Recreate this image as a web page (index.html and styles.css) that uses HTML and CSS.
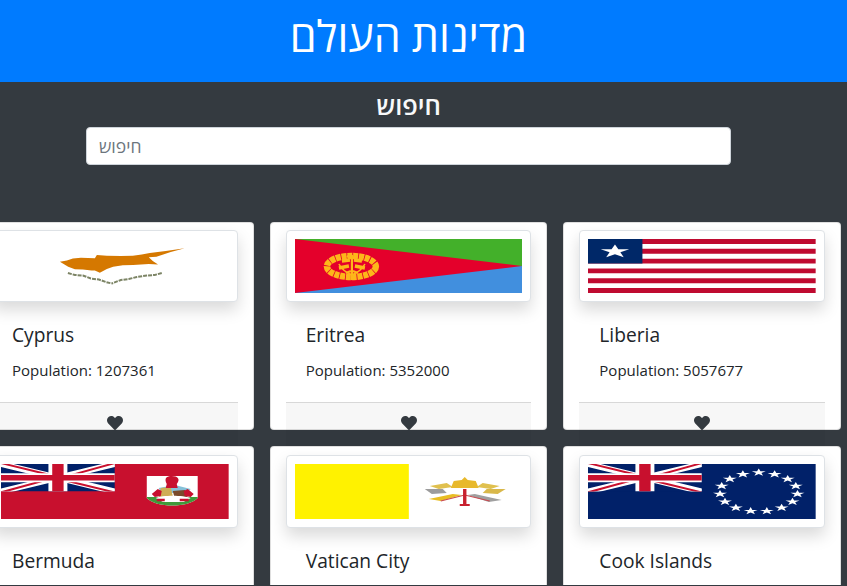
FILE: index.html
```html
<!DOCTYPE html>
<html lang="he" dir="rtl">
<head>
<meta charset="utf-8">
<title>מדינות העולם</title>
<link rel="stylesheet" href="styles.css">
</head>
<body>
<div class="page">
  <svg class="defs" width="0" height="0" aria-hidden="true">
    <defs>
      <symbol id="union" viewBox="0 0 60 30" preserveAspectRatio="none">
        <rect width="60" height="30" fill="#012169"/>
        <path d="M0 0L60 30M60 0L0 30" stroke="#fff" stroke-width="6"/>
        <path d="M0 -1L30 14M60 31L30 16M60 -1L32 15M0 31L28 15" stroke="#c8102e" stroke-width="2"/>
        <path d="M30 0V30M0 15H60" stroke="#fff" stroke-width="10"/>
        <path d="M30 0V30M0 15H60" stroke="#c8102e" stroke-width="6"/>
      </symbol>
      <polygon id="islandstar" points="0,-4 1.7,-1.2 7,-1.2 2.7,0.5 4.3,3.2 0,1.5 -4.3,3.2 -2.7,0.5 -7,-1.2 -1.7,-1.2" fill="#fff"/>
      <symbol id="heart" viewBox="0 0 512 512">
        <path d="M462.3 62.6C407.5 15.9 326 24.3 275.7 76.2L256 96.5l-19.7-20.3C186.1 24.3 104.5 15.9 49.7 62.6c-62.8 53.6-66.1 149.8-9.9 207.9l193.5 199.8c12.5 12.9 32.8 12.9 45.3 0l193.5-199.8c56.3-58.1 53-154.3-9.8-207.9z"/>
      </symbol>
    </defs>
  </svg>

  <header class="site-header">
    <h1 class="site-title">מדינות העולם</h1>
  </header>

  <main class="content">
    <section class="search">
      <h4 class="search-title">חיפוש</h4>
      <input class="search-input" type="text" dir="ltr" placeholder="חיפוש">
    </section>

    <section class="grid">
      <article class="card">
        <div class="thumb">
          <svg class="flag" viewBox="0 0 228 54" preserveAspectRatio="none" role="img" aria-label="Liberia flag">
            <rect width="228" height="54" fill="#fff"/>
            <path d="M0 2.45H228M0 12.27H228M0 22.09H228M0 31.91H228M0 41.73H228M0 51.55H228" stroke="#bf0a30" stroke-width="4.91"/>
            <rect width="54.5" height="24.5" fill="#002868"/>
            <polygon transform="translate(27 12.5)" points="0,-7 3.4,-2.2 14.3,-2.2 5.4,0.8 8.8,5.7 0,2.7 -8.8,5.7 -5.4,0.8 -14.3,-2.2 -3.4,-2.2" fill="#fff"/>
          </svg>
        </div>
        <div class="card-body">
          <h5 class="card-title">Liberia</h5>
          <p class="card-text">Population: 5057677</p>
        </div>
        <div class="card-footer"><svg class="heart"><use href="#heart"/></svg></div>
      </article>

      <article class="card">
        <div class="thumb">
          <svg class="flag" viewBox="0 0 228 54" preserveAspectRatio="none" role="img" aria-label="Eritrea flag">
            <rect width="228" height="27" fill="#43b02a"/>
            <rect y="27" width="228" height="27" fill="#418fde"/>
            <polygon points="0,0 228,27 0,54" fill="#e4002b"/>
            <g class="soft" fill="none" stroke="#fdb71a">
              <ellipse cx="56.5" cy="27.5" rx="24.5" ry="10.5" stroke-width="6.5" stroke-dasharray="5 0.8"/>
              <path d="M57 41V16" stroke-width="2.2"/>
              <path d="M57 36C50 33 46 29 44 25M57 36C64 33 68 29 70 25" stroke-width="1.6"/>
              <path d="M44 29L54 27M70 29L60 27M47 22L55 21M67 22L59 21" stroke-width="3.4"/>
              <path d="M51 34L56 32M63 34L58 32M52 17L56 19M62 17L58 19" stroke-width="2.4"/>
            </g>
          </svg>
        </div>
        <div class="card-body">
          <h5 class="card-title">Eritrea</h5>
          <p class="card-text">Population: 5352000</p>
        </div>
        <div class="card-footer"><svg class="heart"><use href="#heart"/></svg></div>
      </article>

      <article class="card">
        <div class="thumb">
          <svg class="flag" viewBox="0 0 228 54" preserveAspectRatio="none" role="img" aria-label="Cyprus flag">
            <rect width="228" height="54" fill="#fff"/>
            <g class="soft">
              <path d="M59 22.7L66 21.5L72 19.5L80 18.8L94 19.3L96 16L106 16.8L120 17L132 16.7L141 15.5L149 14L165 12L184 9.3L170 13L155.7 17.7L148 18.2L152 22L157.3 25.5L148 25L132.3 26L122 26.3L112.3 27.7L106 30L99 33.7L94 31.5L90.7 31.5L82 30.5L74 30.3L67.3 27.7Z" fill="#d57800"/>
              <path d="M67 34L74 36L82 36.5L90 39.5L98 40.5L105 43L111 44.5" fill="none" stroke="#7c8465" stroke-width="2" stroke-dasharray="4 1"/>
              <path d="M161 34L154 36L146 36.5L136 38L128 40L120 41L111 44.5" fill="none" stroke="#7c8465" stroke-width="2" stroke-dasharray="4 1"/>
            </g>
          </svg>
        </div>
        <div class="card-body">
          <h5 class="card-title">Cyprus</h5>
          <p class="card-text">Population: 1207361</p>
        </div>
        <div class="card-footer"><svg class="heart"><use href="#heart"/></svg></div>
      </article>

      <article class="card">
        <div class="thumb">
          <svg class="flag flag-tall" viewBox="0 0 228 55" preserveAspectRatio="none" role="img" aria-label="Cook Islands flag">
            <rect width="228" height="55" fill="#012169"/>
            <use href="#union" width="114" height="27.5"/>
            <g class="soft">
              <use href="#islandstar" x="171" y="8.5"/><use href="#islandstar" x="186.9" y="10.2"/><use href="#islandstar" x="200" y="15"/>
              <use href="#islandstar" x="208.1" y="22"/><use href="#islandstar" x="209.8" y="30"/><use href="#islandstar" x="204.8" y="37.8"/>
              <use href="#islandstar" x="193.9" y="43.8"/><use href="#islandstar" x="179.1" y="47.1"/><use href="#islandstar" x="162.9" y="47.1"/>
              <use href="#islandstar" x="148.1" y="43.8"/><use href="#islandstar" x="137.2" y="37.8"/><use href="#islandstar" x="132.2" y="30"/>
              <use href="#islandstar" x="133.9" y="22"/><use href="#islandstar" x="142" y="15"/><use href="#islandstar" x="155.1" y="10.2"/>
            </g>
          </svg>
        </div>
        <div class="card-body">
          <h5 class="card-title">Cook Islands</h5>
          <p class="card-text">Population: 17500</p>
        </div>
        <div class="card-footer"><svg class="heart"><use href="#heart"/></svg></div>
      </article>

      <article class="card">
        <div class="thumb">
          <svg class="flag flag-tall" viewBox="0 0 228 55" preserveAspectRatio="none" role="img" aria-label="Vatican City flag">
            <rect width="228" height="55" fill="#fff"/>
            <rect width="114" height="55" fill="#fff200"/>
            <g class="blurred">
              <path d="M170 13L173 16L181 17L184 24H156L159 17L167 16Z" fill="#e8b92c"/>
              <path d="M135 22L152 19L158 23L144 25Z" fill="#e0c04e"/>
              <path d="M205 22L188 19L182 23L196 25Z" fill="#e0c04e"/>
              <path d="M130 25L148 25L152 29L137 30Z" fill="#9c9c9c"/>
              <path d="M211 25L192 25L188 29L203 30Z" fill="#d9b84a"/>
              <path d="M134 35L158 30L167 31L146 37Z" fill="#e8bd22"/>
              <path d="M207 36L180 30L173 31L194 38Z" fill="#a0a0a0"/>
              <path d="M146 37L170 31L195 37" fill="none" stroke="#c9494f" stroke-width="1.2"/>
              <path d="M170 25V42" stroke="#c8202e" stroke-width="3.4"/>
              <path d="M165 41H175" stroke="#c8202e" stroke-width="2"/>
            </g>
          </svg>
        </div>
        <div class="card-body">
          <h5 class="card-title">Vatican City</h5>
          <p class="card-text">Population: 451</p>
        </div>
        <div class="card-footer"><svg class="heart"><use href="#heart"/></svg></div>
      </article>

      <article class="card">
        <div class="thumb">
          <svg class="flag flag-tall" viewBox="0 0 228 55" preserveAspectRatio="none" role="img" aria-label="Bermuda flag">
            <rect width="228" height="55" fill="#c8102e"/>
            <use href="#union" width="114" height="27.5"/>
            <g class="soft">
              <path d="M146 12H197V34C188 44 155 44 146 34Z" fill="#fff"/>
              <path d="M146 33H197V34C188 44 155 44 146 34Z" fill="#3f9a3a"/>
              <path d="M158 24L174 21L190 25L186 29L160 29Z" fill="#86c0d8"/>
              <path d="M160 24L170 23L172 32L158 33Z" fill="#cfae55"/>
              <path d="M172 27L184 26L187 33L174 34Z" fill="#7a4a2a"/>
              <path d="M155 34C162 31 182 31 190 34L183 38H162Z" fill="#fff"/>
              <path d="M166 20C163 14 166 12 171 12C177 12 180 15 176 20L177 24H165Z" fill="#c8102e"/>
              <path d="M151 30L157 25L161 27L160 32L154 33Z M193 30L187 25L183 27L184 32L190 33Z" fill="#c8102e"/>
              <path d="M156 36H164M179 36H188" stroke="#c8102e" stroke-width="2.6"/>
            </g>
          </svg>
        </div>
        <div class="card-body">
          <h5 class="card-title">Bermuda</h5>
          <p class="card-text">Population: 62059</p>
        </div>
        <div class="card-footer"><svg class="heart"><use href="#heart"/></svg></div>
      </article>
    </section>
  </main>
</div>
</body>
</html>
```

FILE: styles.css
```css
* { box-sizing: border-box; }

html, body {
  margin: 0;
  padding: 0;
}

body {
  font-family: "Open Sans", "DejaVu Sans", sans-serif;
  color: #212529;
  background: #343a40;
}

.page {
  height: 586px;
  overflow: hidden;
  border-bottom: 1px solid #343a40;
  background: #343a40;
}

.defs { position: absolute; }

.site-header {
  height: 82px;
  padding: 12px 30px 0 0;
  background: #007bff;
  text-align: center;
}

.site-title {
  margin: 0;
  font-size: 43px;
  font-weight: 500;
  line-height: 48px;
  color: #fff;
}

.search {
  height: 139.5px;
  padding: 9px 30px 0 0;
  display: flex;
  flex-direction: column;
  align-items: center;
}

.search-title {
  margin: 0 0 7px;
  font-size: 25.5px;
  font-weight: 600;
  line-height: 29px;
  color: #f8f9fa;
}

.search-input {
  width: 645px;
  height: 38px;
  padding: 6px 12px;
  border: 1px solid #ced4da;
  border-radius: 4px;
  background: #fff;
  font: 400 17.5px/24px "Open Sans", "DejaVu Sans", sans-serif;
  color: #495057;
}

.search-input::placeholder {
  color: #6c757d;
  opacity: 1;
}

.grid {
  display: grid;
  grid-template-columns: repeat(3, 277.67px);
  gap: 16px;
  padding-right: 6px;
}

.card {
  direction: ltr;
  height: 208.9px;
  padding: 7.6px 15px 0;
  background: #fff;
  border: 1px solid rgba(0, 0, 0, 0.125);
  border-radius: 4px;
}

.thumb {
  padding: 8px;
  background: #fff;
  border: 1px solid #dee2e6;
  border-radius: 4px;
  box-shadow: 0 8px 16px rgba(0, 0, 0, 0.15);
}

.flag {
  display: block;
  width: 100%;
  height: 54px;
}

.flag-tall { height: 55px; }

.soft { filter: blur(0.35px); }

.blurred { filter: blur(0.6px); }

.card-body {
  padding: 21px 20px 19px;
}

.card-title {
  margin: 0 0 11px;
  font-size: 19.2px;
  font-weight: 500;
  line-height: 24px;
  color: #212529;
}

.card-text {
  margin: 0 0 1px;
  font-size: 15px;
  line-height: 24px;
}

.card-footer {
  height: 49px;
  padding-top: 13px;
  text-align: center;
  background: rgba(0, 0, 0, 0.03);
  border-top: 1px solid rgba(0, 0, 0, 0.125);
}

.heart {
  display: inline-block;
  width: 16px;
  height: 16px;
  margin-top: -1px;
  fill: #343a40;
  vertical-align: top;
}
```
